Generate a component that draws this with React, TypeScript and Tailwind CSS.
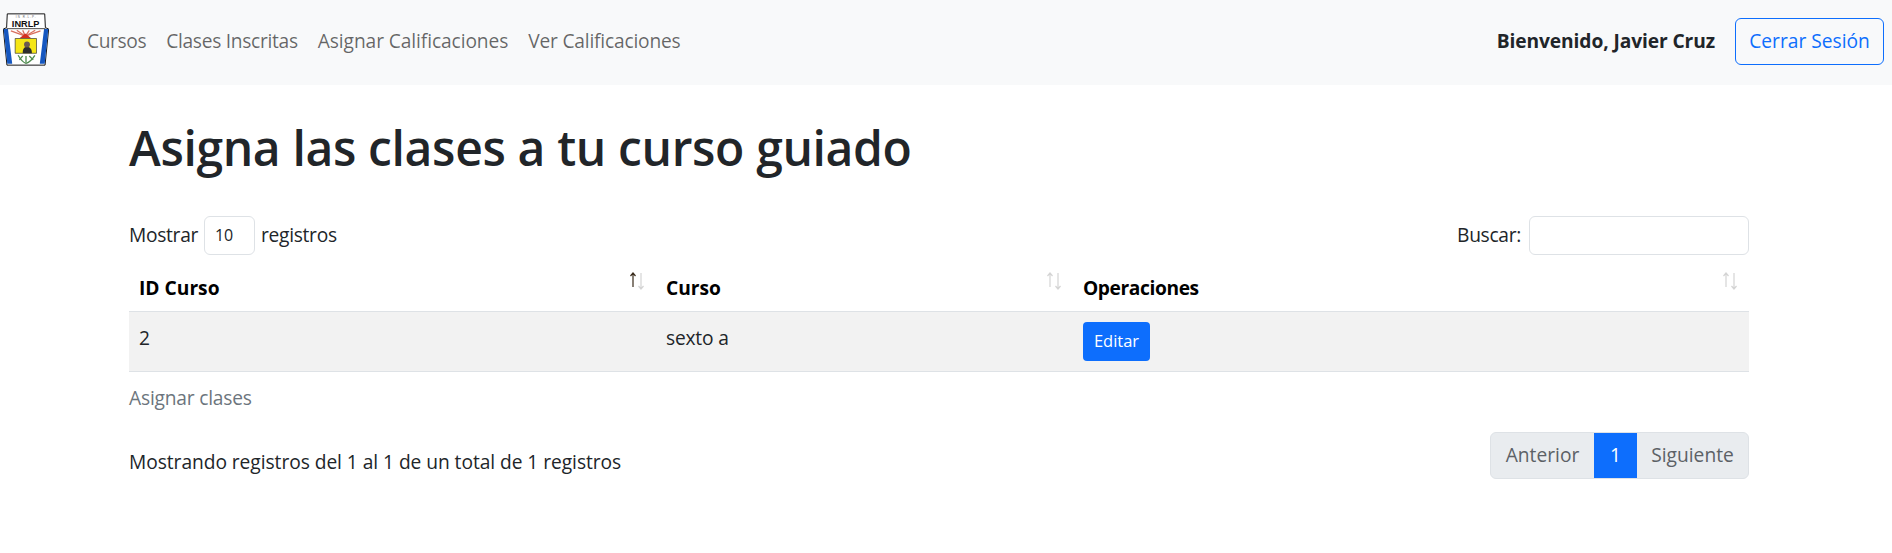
import React from 'react';

const font = "font-['Open_Sans','Noto_Sans',sans-serif]";

function Logo() {
  return (
    <svg viewBox="0 0 140 160" className="w-[46px] h-[53px] shrink-0 mb-[6px]">
      <path d="M13 2H127L129 44L139 48L128 158H12L1 48L11 44Z" fill="#fff" stroke="#111" strokeWidth="3" />
      <path d="M2 48L15 48L28 154H13Z" fill="#1557c0" />
      <path d="M138 48L125 48L112 154H127Z" fill="#1557c0" />
      <path d="M11 47H129" stroke="#222" strokeWidth="2.5" />
      <text x="69" y="42" textAnchor="middle" fontSize="30" fontWeight="700" fontFamily="Liberation Sans, sans-serif" fill="#111" textLength="84" lengthAdjust="spacingAndGlyphs">INRLP</text>
      <text x="69" y="14" textAnchor="middle" fontSize="9" fontFamily="Liberation Sans, sans-serif" fill="#666" textLength="60" lengthAdjust="spacing">IN R.L.P.</text>
      <g stroke="#d9705f" strokeWidth="4">
        <path d="M68 70L24 54" />
        <path d="M68 70L42 52" />
        <path d="M68 70L60 52" />
        <path d="M68 70L80 52" />
        <path d="M68 70L98 52" />
        <path d="M68 70L114 54" />
      </g>
      <path d="M50 76L68 62L86 76Z" fill="#d32f1f" />
      <path d="M37 77H102V122H37Z" fill="#f5e616" stroke="#333" strokeWidth="2" />
      <path d="M60 122C60 108 64 103 73 103C82 103 88 108 88 122Z" fill="#2d2d2d" />
      <circle cx="73" cy="95" r="9" fill="#6b5a50" />
      <g stroke="#4d8a4d" strokeWidth="4" fill="none">
        <path d="M46 128C54 142 62 150 70 153" />
        <path d="M97 128C88 142 78 150 70 153" />
        <path d="M50 142L60 130" />
        <path d="M92 142L80 130" />
        <path d="M70 130V150" />
      </g>
    </svg>
  );
}

function SortIcon({ active }: { active?: boolean }) {
  return (
    <svg viewBox="0 0 18 18" className="absolute right-[10px] top-[15px] w-[18px] h-[18px]">
      <path d="M5 15V1M2.5 4L5 1L7.5 4" fill="none" stroke={active ? '#3a2c1c' : '#d4d4d4'} strokeWidth="1.2" />
      <path d="M13 1V17M10.5 14L13 17L15.5 14" fill="none" stroke="#d4d4d4" strokeWidth="1.2" />
    </svg>
  );
}

export default function App() {
  return (
    <div className={`${font} bg-white text-[#212529] text-[19.2px] leading-[1.5] min-h-[553px]`}>
      <nav className="h-[85px] bg-[#f8f9fa] flex items-center pl-[3px] pr-[8px]">
        <Logo />
        <ul className="flex ml-[38px] gap-[20px] text-[#00000099] pb-[2px]">
          <li className="tracking-[-0.4px]">Cursos</li>
          <li className="tracking-[-0.3px]">Clases Inscritas</li>
          <li className="tracking-[-0.1px]">Asignar Calificaciones</li>
          <li className="tracking-[-0.2px]">Ver Calificaciones</li>
        </ul>
        <span className="ml-auto font-bold tracking-[-0.1px] pb-[2px]">Bienvenido, Javier Cruz</span>
        <button className="ml-[20px] w-[149px] h-[47px] border border-[#0d6efd] rounded-[6px] text-[#0d6efd] mb-[2px]">
          Cerrar Sesión
        </button>
      </nav>

      <main className="ml-[129px] w-[1620px]">
        <h1 className="text-[48px] font-semibold leading-[1.2] pt-[34px] tracking-[-0.35px]">Asigna las clases a tu curso guiado</h1>

        <div className="flex justify-between items-center mt-[39px] h-[39px]">
          <div className="flex items-center gap-[6px] tracking-[-0.3px]">
            <span>Mostrar</span>
            <div className="w-[51px] h-[39px] border border-[#dee2e6] rounded-[6px] pl-[10px] flex items-center text-[16px]">10</div>
            <span>registros</span>
          </div>
          <div className="flex items-center gap-[8px] tracking-[-0.3px]">
            <span>Buscar:</span>
            <input className="w-[220px] h-[39px] border border-[#dee2e6] rounded-[6px]" />
          </div>
        </div>

        <table className="w-full table-fixed border-collapse mt-[2px] text-black">
          <colgroup>
            <col className="w-[527px]" />
            <col className="w-[417px]" />
            <col />
          </colgroup>
          <thead>
            <tr className="h-[55px] border-b border-b-[#dee2e6]">
              <th className="relative text-left font-bold px-[10px] pt-[9px]">ID Curso<SortIcon active /></th>
              <th className="relative text-left font-bold px-[10px] pt-[9px]">Curso<SortIcon /></th>
              <th className="relative text-left font-bold px-[10px] pt-[9px] tracking-[-0.4px]">Operaciones<SortIcon /></th>
            </tr>
          </thead>
          <tbody>
            <tr className="h-[60px] bg-[#f2f2f2] border-b border-b-[#dee2e6] text-[#212529]">
              <td className="px-[10px] pb-[6px]">2</td>
              <td className="px-[10px] pb-[6px] tracking-[-0.2px]">sexto a</td>
              <td className="px-[10px]">
                <button className="w-[67px] h-[39px] bg-[#0d6efd] text-white rounded-[4px] text-[16.5px] flex items-center justify-center">Editar</button>
              </td>
            </tr>
          </tbody>
        </table>

        <p className="text-[#6c757d] mt-[12px] tracking-[-0.2px]">Asignar clases</p>

        <div className="flex justify-between items-start mt-[19px]">
          <span className="mt-[16px] tracking-[-0.05px]">Mostrando registros del 1 al 1 de un total de 1 registros</span>
          <div className="flex h-[47px] items-stretch rounded-[6px] overflow-hidden border border-[#dee2e6] bg-[#e9ecef] text-[#5c6166]">
            <span className="w-[103px] flex items-center justify-center">Anterior</span>
            <span className="w-[43px] flex items-center justify-center bg-[#0d6efd] text-white">1</span>
            <span className="w-[111px] flex items-center justify-center">Siguiente</span>
          </div>
        </div>
      </main>
    </div>
  );
}
